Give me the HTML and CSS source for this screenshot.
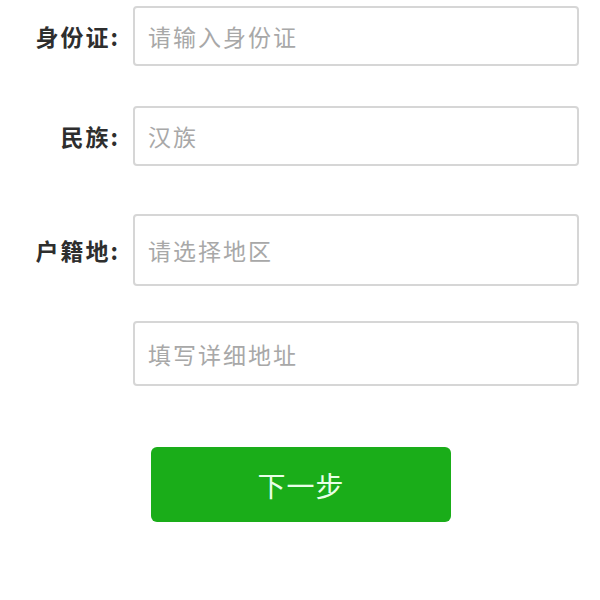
FILE: index.html
```html
<!doctype html>
<html lang="zh-CN">
  <head>
    <meta charset="UTF-8" />
    <meta name="viewport" content="width=device-width, initial-scale=1.0" />
    <title>填写资料</title>
    <link rel="stylesheet" href="styles.css">
  </head>
  <body>
    <form class="form">
      <div class="row row-id">
        <label class="label" for="idcard">身份证:</label>
        <input class="field" id="idcard" type="text" placeholder="请输入身份证" />
      </div>
      <div class="row row-nation">
        <label class="label" for="nation">民族:</label>
        <input class="field" id="nation" type="text" placeholder="汉族" />
      </div>
      <div class="row row-region">
        <label class="label" for="region">户籍地:</label>
        <input class="field" id="region" type="text" placeholder="请选择地区" />
      </div>
      <div class="row row-address">
        <span class="label"></span>
        <input class="field" id="address" type="text" placeholder="填写详细地址" />
      </div>
      <div class="actions">
        <button class="btn-next" type="button">下一步</button>
      </div>
    </form>
  </body>
</html>
```

FILE: styles.css
```css
html,
body {
  margin: 0;
  padding: 0;
  background: #fff;
}
body {
  font-family: "Noto Sans CJK SC", "Noto Sans", sans-serif;
  color: #333;
}
.form {
  padding-top: 6px;
  display: flex;
  flex-direction: column;
}
.row {
  display: flex;
  align-items: center;
}
.label {
  width: 120px;
  flex: none;
  padding-right: 13px;
  text-align: right;
  font-size: 23px;
  font-weight: bold;
  letter-spacing: 2px;
  color: #2e2e2e;
}
.field {
  box-sizing: border-box;
  width: 446px;
  height: 60px;
  padding: 0 13px;
  border: 2px solid #d6d6d6;
  border-radius: 4px;
  font-family: inherit;
  font-size: 23px;
  letter-spacing: 2px;
  color: #333;
  background: #fff;
  outline: none;
}
.field::placeholder {
  color: #a8a8a8;
}
.row-nation {
  margin-top: 40px;
}
.row-region {
  margin-top: 48px;
}
.row-region .field {
  height: 72px;
}
.row-address {
  margin-top: 35px;
}
.row-address .field {
  height: 65px;
}
.actions {
  margin-top: 61px;
  padding-left: 151px;
}
.btn-next {
  width: 300px;
  height: 75px;
  border: none;
  border-radius: 6px;
  background: #1aad19;
  color: #e8ffe8;
  font-family: inherit;
  font-size: 28px;
  letter-spacing: 1px;
  cursor: pointer;
}
```
